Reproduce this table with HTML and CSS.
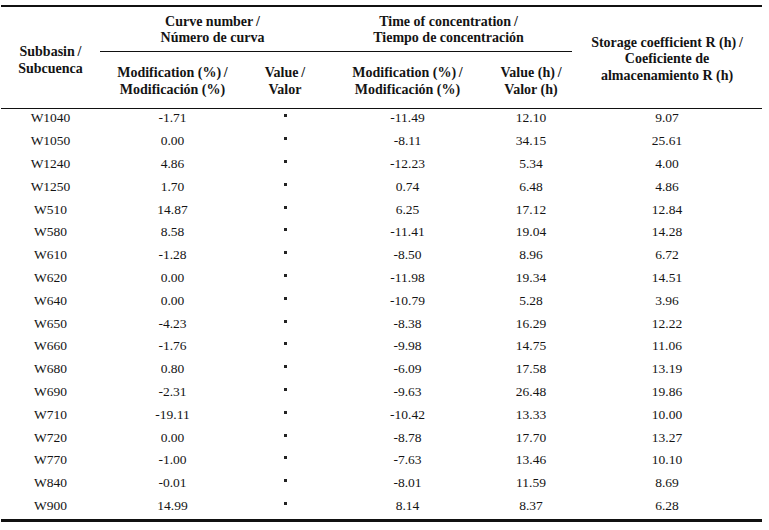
FILE: index.html
```html
<!DOCTYPE html>
<html>
<head>
<meta charset="utf-8">
<link rel="stylesheet" href="styles.css">
</head>
<body>
<div class="wrap">
<table class="data">
  <colgroup>
    <col class="c1"><col class="c2"><col class="c3"><col class="c4"><col class="c5"><col class="c6">
  </colgroup>
  <thead>
    <tr class="h1">
      <th rowspan="2" class="sub">Subbasin&#8201;/<br>Subcuenca</th>
      <th colspan="2" class="grp">Curve number&#8201;/<br>Número de curva</th>
      <th colspan="2" class="grp">Time of concentration&#8201;/<br>Tiempo de concentración</th>
      <th rowspan="2" class="sto">Storage coefficient R (h)&#8201;/<br>Coeficiente de<br>almacenamiento R (h)</th>
    </tr>
    <tr class="h2">
      <th>Modification (%)&#8201;/<br>Modificación (%)</th>
      <th>Value&#8201;/<br>Valor</th>
      <th>Modification (%)&#8201;/<br>Modificación (%)</th>
      <th>Value (h)&#8201;/<br>Valor (h)</th>
    </tr>
  </thead>
  <tbody>
    <tr><td>W1040</td><td>-1.71</td><td><span class="mk"></span></td><td>-11.49</td><td>12.10</td><td>9.07</td></tr>
    <tr><td>W1050</td><td>0.00</td><td><span class="mk"></span></td><td>-8.11</td><td>34.15</td><td>25.61</td></tr>
    <tr><td>W1240</td><td>4.86</td><td><span class="mk"></span></td><td>-12.23</td><td>5.34</td><td>4.00</td></tr>
    <tr><td>W1250</td><td>1.70</td><td><span class="mk"></span></td><td>0.74</td><td>6.48</td><td>4.86</td></tr>
    <tr><td>W510</td><td>14.87</td><td><span class="mk"></span></td><td>6.25</td><td>17.12</td><td>12.84</td></tr>
    <tr><td>W580</td><td>8.58</td><td><span class="mk"></span></td><td>-11.41</td><td>19.04</td><td>14.28</td></tr>
    <tr><td>W610</td><td>-1.28</td><td><span class="mk"></span></td><td>-8.50</td><td>8.96</td><td>6.72</td></tr>
    <tr><td>W620</td><td>0.00</td><td><span class="mk"></span></td><td>-11.98</td><td>19.34</td><td>14.51</td></tr>
    <tr><td>W640</td><td>0.00</td><td><span class="mk"></span></td><td>-10.79</td><td>5.28</td><td>3.96</td></tr>
    <tr><td>W650</td><td>-4.23</td><td><span class="mk"></span></td><td>-8.38</td><td>16.29</td><td>12.22</td></tr>
    <tr><td>W660</td><td>-1.76</td><td><span class="mk"></span></td><td>-9.98</td><td>14.75</td><td>11.06</td></tr>
    <tr><td>W680</td><td>0.80</td><td><span class="mk"></span></td><td>-6.09</td><td>17.58</td><td>13.19</td></tr>
    <tr><td>W690</td><td>-2.31</td><td><span class="mk"></span></td><td>-9.63</td><td>26.48</td><td>19.86</td></tr>
    <tr><td>W710</td><td>-19.11</td><td><span class="mk"></span></td><td>-10.42</td><td>13.33</td><td>10.00</td></tr>
    <tr><td>W720</td><td>0.00</td><td><span class="mk"></span></td><td>-8.78</td><td>17.70</td><td>13.27</td></tr>
    <tr><td>W770</td><td>-1.00</td><td><span class="mk"></span></td><td>-7.63</td><td>13.46</td><td>10.10</td></tr>
    <tr><td>W840</td><td>-0.01</td><td><span class="mk"></span></td><td>-8.01</td><td>11.59</td><td>8.69</td></tr>
    <tr><td>W900</td><td>14.99</td><td><span class="mk"></span></td><td>8.14</td><td>8.37</td><td>6.28</td></tr>
  </tbody>
</table>
</div>
</body>
</html>
```
FILE: styles.css
```css
html, body {
  margin: 0;
  padding: 0;
  background: #ffffff;
}
body {
  font-family: "Liberation Serif", "Times New Roman", serif;
  color: #141414;
}
.wrap {
  padding: 5px 0 0 1px;
}
.data {
  width: 761px;
  border-collapse: collapse;
  table-layout: fixed;
  border-top: 2px solid #111;
  border-bottom: 3px solid #111;
}
.c1 { width: 99px; }
.c2 { width: 145px; }
.c3 { width: 80px; }
.c4 { width: 165px; }
.c5 { width: 82px; }
.c6 { width: 190px; }

th {
  font-weight: bold;
  font-size: 14px;
  line-height: 16.5px;
  padding: 0;
  text-align: center;
  vertical-align: middle;
}
.h1 th { height: 42px; padding-top: 2px; }
.h1 th.grp { border-bottom: 1px solid #111; }
.h1 th.sub { padding-top: 6px; }
.h1 th.sto { padding-top: 4px; }
.h2 th { height: 53px; padding-top: 3px; }
thead { border-bottom: 1px solid #111; }

td {
  font-size: 13.5px;
  height: 18.8px;
  padding: 0 0 4px 0;
  text-align: center;
  vertical-align: middle;
  line-height: 16px;
}
.mk {
  display: inline-block;
  width: 3px;
  height: 3px;
  background: #222;
  vertical-align: 5px;
}
```
